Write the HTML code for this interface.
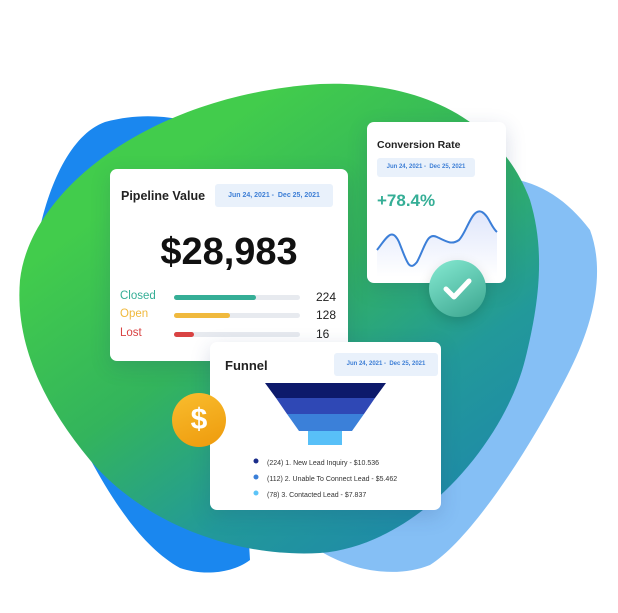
<!DOCTYPE html>
<html><head><style>
*{margin:0;padding:0;box-sizing:border-box}
body{width:618px;height:613px;background:#fff;position:relative;overflow:hidden;font-family:"Liberation Sans",sans-serif}
.card{position:absolute;background:#fff;border-radius:7px;box-shadow:0 6px 20px rgba(40,60,120,.18)}
.date{position:absolute;background:#e9f1fb;color:#3e7fd6;border-radius:3px;font-size:7px;text-align:center;font-weight:bold}
.lbl{position:absolute;font-size:11.5px}
.bar{position:absolute;left:64px;width:126px;height:5px;border-radius:3px;background:#e7eaef}
.bar i{display:block;height:5px;border-radius:3px}
.num{position:absolute;left:206px;font-size:12px;color:#222}
</style></head><body>
<svg width="618" height="613" style="position:absolute;left:0;top:0">
<defs>
<linearGradient id="g" x1="0.25" y1="0.2" x2="0.8" y2="0.9">
<stop offset="0" stop-color="#42cc4c"/><stop offset="0.4" stop-color="#33b45c"/><stop offset="0.75" stop-color="#22999a"/><stop offset="1" stop-color="#1f8ca6"/></linearGradient>
</defs>
<path d="M30,330 C28,240 55,140 105,122 C150,110 190,118 225,135 L250,560 C230,575 200,575 180,568 C130,540 95,470 62,405 C42,370 31,350 30,330Z" fill="#1a87ef"/>
<path d="M470,180 C520,170 560,190 590,230 C605,270 595,320 570,370 C530,450 470,540 430,565 C380,585 310,560 280,512 L420,250 C440,210 450,185 470,180Z" fill="#85bff5"/>
<path d="M320,84 C420,80 500,120 530,200 C545,250 540,300 525,360 C505,440 420,545 320,553 C230,558 140,520 90,460 C40,400 15,340 20,280 C30,190 150,95 320,84Z" fill="url(#g)"/>
</svg>

<div class="card" style="left:110px;top:169px;width:238px;height:192px">
<div style="position:absolute;left:11px;top:20px;font-size:12.5px;font-weight:bold;color:#222">Pipeline Value</div>
<div class="date" style="left:105px;top:15px;width:118px;height:23px;line-height:23px">Jun 24, 2021 -&nbsp; Dec 25, 2021</div>
<div style="position:absolute;left:0;width:238px;top:62px;text-align:center;font-size:38px;font-weight:bold;color:#111">$28,983</div>
<div class="lbl" style="left:10px;top:121px;color:#35ae96">Closed</div>
<div class="bar" style="top:126px"><i style="width:82px;background:#35ae96"></i></div>
<div class="num" style="top:121px">224</div>
<div class="lbl" style="left:10px;top:139px;color:#f0b93d">Open</div>
<div class="bar" style="top:144px"><i style="width:56px;background:#f0b93d"></i></div>
<div class="num" style="top:139px">128</div>
<div class="lbl" style="left:10px;top:158px;color:#d94343">Lost</div>
<div class="bar" style="top:163px"><i style="width:20px;background:#d94343"></i></div>
<div class="num" style="top:158px">16</div>
</div>

<div class="card" style="left:367px;top:122px;width:139px;height:161px">
<div style="position:absolute;left:10px;top:17px;font-size:10.5px;font-weight:bold;color:#222">Conversion Rate</div>
<div class="date" style="left:10px;top:36px;width:98px;height:19px;line-height:19px;font-size:6px">Jun 24, 2021 - &nbsp;Dec 25, 2021</div>
<div style="position:absolute;left:10px;top:69px;font-size:17px;font-weight:bold;color:#35ae96">+78.4%</div>
<svg width="139" height="161" style="position:absolute;left:0;top:0">
<defs><linearGradient id="a" x1="0" y1="0" x2="0" y2="1"><stop offset="0" stop-color="#dfe6fb"/><stop offset="1" stop-color="#fff"/></linearGradient></defs>
<path d="M10,128 C20,115 25,105 32,120 C40,140 42,150 50,140 C58,125 60,110 70,115 C80,120 85,123 92,118 C100,110 105,85 115,90 C122,94 124,105 130,110 L130,155 L10,155Z" fill="url(#a)"/>
<path d="M10,128 C20,115 25,105 32,120 C40,140 42,150 50,140 C58,125 60,110 70,115 C80,120 85,123 92,118 C100,110 105,85 115,90 C122,94 124,105 130,110" fill="none" stroke="#3c7fd8" stroke-width="2"/>
</svg>
</div>
<div style="position:absolute;left:429px;top:260px;width:57px;height:57px;border-radius:50%;background:linear-gradient(150deg,#86ead2,#3aa48e);box-shadow:0 4px 12px rgba(0,0,0,.15)">
<svg width="57" height="57"><path d="M17,29 L25,37 L40,21" fill="none" stroke="#fff" stroke-width="5" stroke-linecap="round" stroke-linejoin="round"/></svg></div>

<div class="card" style="left:210px;top:342px;width:231px;height:168px">
<div style="position:absolute;left:15px;top:16px;font-size:13px;font-weight:bold;color:#222">Funnel</div>
<div class="date" style="left:124px;top:11px;width:104px;height:23px;line-height:23px;font-size:6px">Jun 24, 2021 - &nbsp;Dec 25, 2021</div>
<svg width="231" height="168" style="position:absolute;left:0;top:0">
<path d="M55,41 L176,41 L165,56 L66,56Z" fill="#0d1a6b"/>
<path d="M66,56 L165,56 L154,72 L77,72Z" fill="#2f48b5"/>
<path d="M77,72 L154,72 L142,89 L89,89Z" fill="#3b80d9"/>
<rect x="98" y="89" width="34" height="14" fill="#58c0f8"/>
<circle cx="46" cy="119" r="2.5" fill="#1a2c8a"/>
<circle cx="46" cy="135" r="2.5" fill="#3a7fd8"/>
<circle cx="46" cy="151" r="2.5" fill="#5cc4f8"/>
</svg>
<div style="position:absolute;left:57px;top:114px;font-size:7px;color:#333;line-height:16px">(224) 1. New Lead Inquiry - $10.536<br>(112) 2. Unable To Connect Lead - $5.462<br>(78) 3. Contacted Lead - $7.837</div>
</div>

<div style="position:absolute;left:172px;top:393px;width:54px;height:54px;border-radius:50%;background:linear-gradient(160deg,#f9bd2e,#ee9a0c);color:#fff;font-size:30px;font-weight:bold;text-align:center;line-height:54px">$</div>
</body></html>
